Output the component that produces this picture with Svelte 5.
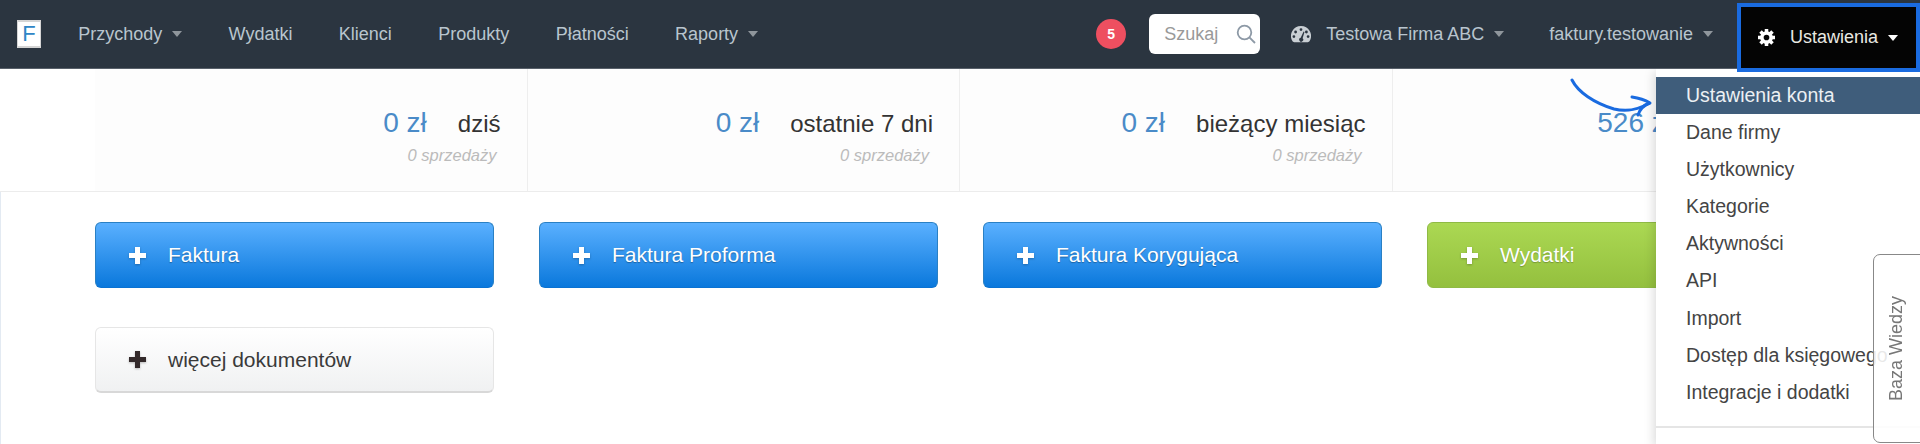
<script>
  const leftLinks = [
    { label: "Przychody", caret: true },
    { label: "Wydatki" },
    { label: "Klienci" },
    { label: "Produkty" },
    { label: "Płatności" },
    { label: "Raporty", caret: true },
  ];

  const stats = [
    { value: "0 zł", label: "dziś", sales: "0 sprzedaży" },
    { value: "0 zł", label: "ostatnie 7 dni", sales: "0 sprzedaży" },
    { value: "0 zł", label: "bieżący miesiąc", sales: "0 sprzedaży" },
    { value: "526 zł" },
  ];

  const actions = [
    { label: "Faktura", kind: "blue" },
    { label: "Faktura Proforma", kind: "blue" },
    { label: "Faktura Korygująca", kind: "blue" },
    { label: "Wydatki", kind: "green" },
    { label: "więcej dokumentów", kind: "plain" },
  ];

  const menuItems = [
    "Ustawienia konta",
    "Dane firmy",
    "Użytkownicy",
    "Kategorie",
    "Aktywności",
    "API",
    "Import",
    "Dostęp dla księgowego",
    "Integracje i dodatki",
  ];

  const gearTeeth = [0, 45, 90, 135, 180, 225, 270, 315];
</script>

<div class="page">
  <nav class="topbar">
    <div class="logo">F</div>
    {#each leftLinks as link}
      <span class="nav-link">
        {link.label}
        {#if link.caret}<i class="caret"></i>{/if}
      </span>
    {/each}

    <div class="nav-right">
      <span class="badge">5</span>
      <div class="search">
        <span>Szukaj</span>
        <svg width="20" height="20" viewBox="0 0 20 20" fill="none" stroke="#8d99a6" stroke-width="1.8">
          <circle cx="8.5" cy="8.5" r="6.8" />
          <path d="M13.4 13.4 19 19" />
        </svg>
      </div>
      <span class="nav-link company">
        <svg width="20" height="17" viewBox="0 0 20 17" fill="#c9cfd4">
          <path fill-rule="evenodd" d="M10 0a10 10 0 0 0-8.6 15.100c.4.7 1 1.200 1.800 1.200h13.600c.8 0 1.400-.5 1.800-1.200A10 10 0 0 0 10 0zM10 2.200a1.400 1.400 0 1 1 0 2.800 1.400 1.400 0 0 1 0-2.800zM4.600 4.600a1.400 1.400 0 1 1 0 2.800 1.400 1.400 0 0 1 0-2.800zM15.400 4.600a1.400 1.400 0 1 1 0 2.800 1.400 1.400 0 0 1 0-2.800zM2.900 9.200a1.400 1.400 0 1 1 0 2.800 1.400 1.400 0 0 1 0-2.800zM17.100 9.200a1.400 1.400 0 1 1 0 2.800 1.400 1.400 0 0 1 0-2.800zM12.600 5.600l.9.4-1.900 6.300a2 2 0 1 1-1.900-.5z" />
        </svg>
        Testowa Firma ABC
        <i class="caret"></i>
      </span>
      <span class="nav-link account">
        faktury.testowanie
        <i class="caret"></i>
      </span>
      <span class="settings">
        <svg width="17" height="17" viewBox="0 0 24 24" fill="#fff">
          <circle cx="12" cy="12" r="6.500" fill="none" stroke="#fff" stroke-width="5" />
          {#each gearTeeth as angle}
            <rect x="9.500" y="0" width="5" height="5" transform="rotate({angle} 12 12)" />
          {/each}
        </svg>
        Ustawienia
        <i class="caret white"></i>
      </span>
    </div>
  </nav>

  <section class="stats">
    {#each stats as stat}
      <div class="stat">
        <div class="stat-main">
          <span class="stat-value">{stat.value}</span>
          {#if stat.label}<span class="stat-label">{stat.label}</span>{/if}
        </div>
        {#if stat.sales}<div class="stat-sales">{stat.sales}</div>{/if}
      </div>
    {/each}
  </section>

  <section class="actions">
    {#each actions as action}
      <button type="button" class="action {action.kind}">
        <svg class="plus" width="17" height="17" viewBox="0 0 17 17">
          <path d="M6 0h5v6h6v5h-6v6H6v-6H0V6h6z" />
        </svg>
        {action.label}
      </button>
    {/each}
  </section>

  <svg class="pointer" width="90" height="42" viewBox="0 0 90 42" fill="none" stroke="#1a6be0" stroke-width="3" stroke-linecap="round" stroke-linejoin="round">
    <path d="M2 2C8 14 24 25 44 31c13 3 26 0 35-6" />
    <path d="M62 19c7 1 13 3 18 6-6 2-10 6-12 12" />
  </svg>

  <div class="menu">
    {#each menuItems as item, i}
      <div class="menu-item" class:active={i === 0}>{item}</div>
    {/each}
    <div class="menu-divider"></div>
  </div>

  <div class="help-tab"><span>Baza Wiedzy</span></div>
</div>

<style>
  :global(body) {
    margin: 0;
    background: #fff;
    overflow: hidden;
  }

  .page {
    position: relative;
    width: 1920px;
    height: 444px;
    overflow: hidden;
    font-family: "Liberation Sans", Arial, sans-serif;
    color: #333;
    box-shadow: inset 1px 0 0 #e3eaf2;
  }

  .topbar {
    position: relative;
    z-index: 2;
    display: flex;
    align-items: center;
    height: 69px;
    padding-left: 17px;
    background: #2b3540;
    border-bottom: 1px solid #58606a;
    box-sizing: border-box;
  }

  .logo {
    box-sizing: border-box;
    width: 24px;
    height: 28px;
    margin-right: 14px;
    border: 1px solid #d5d5d5;
    border-width: 2px 1px;
    background: #fff;
    color: #2f86c6;
    font-size: 22px;
    line-height: 24px;
    text-align: center;
  }

  .nav-link {
    display: inline-flex;
    align-items: center;
    padding: 0 23.200px;
    color: #b9c5ce;
    font-size: 18px;
    white-space: nowrap;
  }

  .caret {
    display: inline-block;
    width: 0;
    height: 0;
    margin-left: 10px;
    border-top: 6px solid #8f969c;
    border-left: 5.500px solid transparent;
    border-right: 5.500px solid transparent;
  }

  .caret.white {
    border-top-color: #fff;
  }

  .nav-right {
    display: flex;
    align-items: center;
    margin-left: auto;
    align-self: stretch;
  }

  .badge {
    width: 30px;
    height: 30px;
    margin-right: 23px;
    border-radius: 50%;
    background: #ee4f60;
    color: #fff;
    font-size: 14px;
    font-weight: 700;
    line-height: 30px;
    text-align: center;
  }

  .search {
    display: flex;
    align-items: center;
    justify-content: space-between;
    box-sizing: border-box;
    width: 111px;
    height: 40px;
    padding: 0 4px 0 15px;
    border-radius: 6px;
    background: #fff;
    color: #999;
    font-size: 18px;
  }

  .company {
    padding: 0 23px 0 31px;
  }

  .company svg {
    margin-right: 15px;
  }

  .account {
    padding: 0 24px 0 22px;
  }

  .settings {
    display: flex;
    align-items: center;
    align-self: flex-start;
    box-sizing: border-box;
    width: 183px;
    height: 69px;
    margin-top: 3px;
    padding-left: 17px;
    background: #040404;
    border: 4px solid #1a6be0;
    color: #e9e9e2;
    font-size: 18px;
    white-space: nowrap;
  }

  .settings svg {
    margin-right: 15px;
  }

  .stats {
    display: flex;
    height: 122px;
    padding-left: 95px;
    border-bottom: 1px solid #ececec;
    background: linear-gradient(90deg, #fff 95px, #fdfdfd 95px);
  }

  .stat {
    display: flex;
    flex-direction: column;
    align-items: flex-end;
    box-sizing: border-box;
    width: 432.500px;
    padding: 38px 26px 0 0;
    border-right: 1px solid #eee;
  }

  .stat:last-child {
    padding-right: 153px;
    border-right: 0;
  }

  .stat-main {
    display: flex;
    align-items: baseline;
    gap: 31px;
  }

  .stat-value {
    color: #4a8bc8;
    font-size: 28px;
  }

  .stat-label {
    color: #333;
    font-size: 24px;
  }

  .stat-sales {
    margin: 7px 4px 0 0;
    color: #bbb;
    font-size: 16.500px;
    font-style: italic;
  }

  .actions {
    display: grid;
    grid-template-columns: repeat(4, 399px);
    column-gap: 45px;
    row-gap: 39px;
    padding: 30px 0 0 95px;
  }

  .action {
    display: flex;
    align-items: center;
    gap: 22px;
    height: 66px;
    padding: 0 0 0 33px;
    border-radius: 6px;
    font-family: inherit;
    font-size: 21px;
    text-align: left;
  }

  .plus {
    flex: none;
    fill: currentColor;
    filter: drop-shadow(0 1px 1px rgba(0, 0, 0, 0.25));
  }

  .blue {
    border: 1px solid #2a80c4;
    border-bottom-color: #0a72d2;
    background: linear-gradient(180deg, #5ab0ff 0%, #0a78dc 100%);
    color: #fff;
    text-shadow: 0 1px 1px rgba(0, 0, 0, 0.3);
  }

  .green {
    border: 1px solid #8fba45;
    background: linear-gradient(180deg, #abd853 0%, #94c03e 100%);
    color: #fff;
    text-shadow: 0 1px 1px rgba(0, 0, 0, 0.25);
  }

  .plain {
    border: 1px solid #e6e6e6;
    border-bottom: 2px solid #d8d8d8;
    background: linear-gradient(180deg, #fff 0%, #f0f1f2 100%);
    color: #3a3a3a;
  }

  .plain .plus {
    color: #33292a;
  }

  .pointer {
    position: absolute;
    left: 1570px;
    top: 78px;
  }

  .menu {
    position: absolute;
    left: 1656px;
    right: 0;
    top: 69px;
    bottom: 0;
    padding-top: 8px;
    background: #fff;
    box-shadow: -2px 3px 10px rgba(0, 0, 0, 0.15);
  }

  .menu-item {
    height: 37.100px;
    padding-left: 30px;
    color: #444;
    font-size: 19.500px;
    line-height: 37.100px;
    white-space: nowrap;
  }

  .menu-item.active {
    background: #3f5d7b;
    color: #ecf0f3;
  }

  .menu-divider {
    margin-top: 15px;
    border-top: 2px solid #e5e5e5;
  }

  .help-tab {
    position: absolute;
    left: 1873px;
    top: 254px;
    display: flex;
    align-items: center;
    justify-content: flex-start;
    box-sizing: border-box;
    width: 60px;
    height: 189px;
    padding: 0 0 0 12px;
    border: 1px solid #888;
    border-radius: 7px;
    background: rgba(255, 255, 255, 0.88);
  }

  .help-tab span {
    color: #777;
    font-size: 18px;
    white-space: nowrap;
    writing-mode: vertical-rl;
    transform: rotate(180deg);
  }
</style>
